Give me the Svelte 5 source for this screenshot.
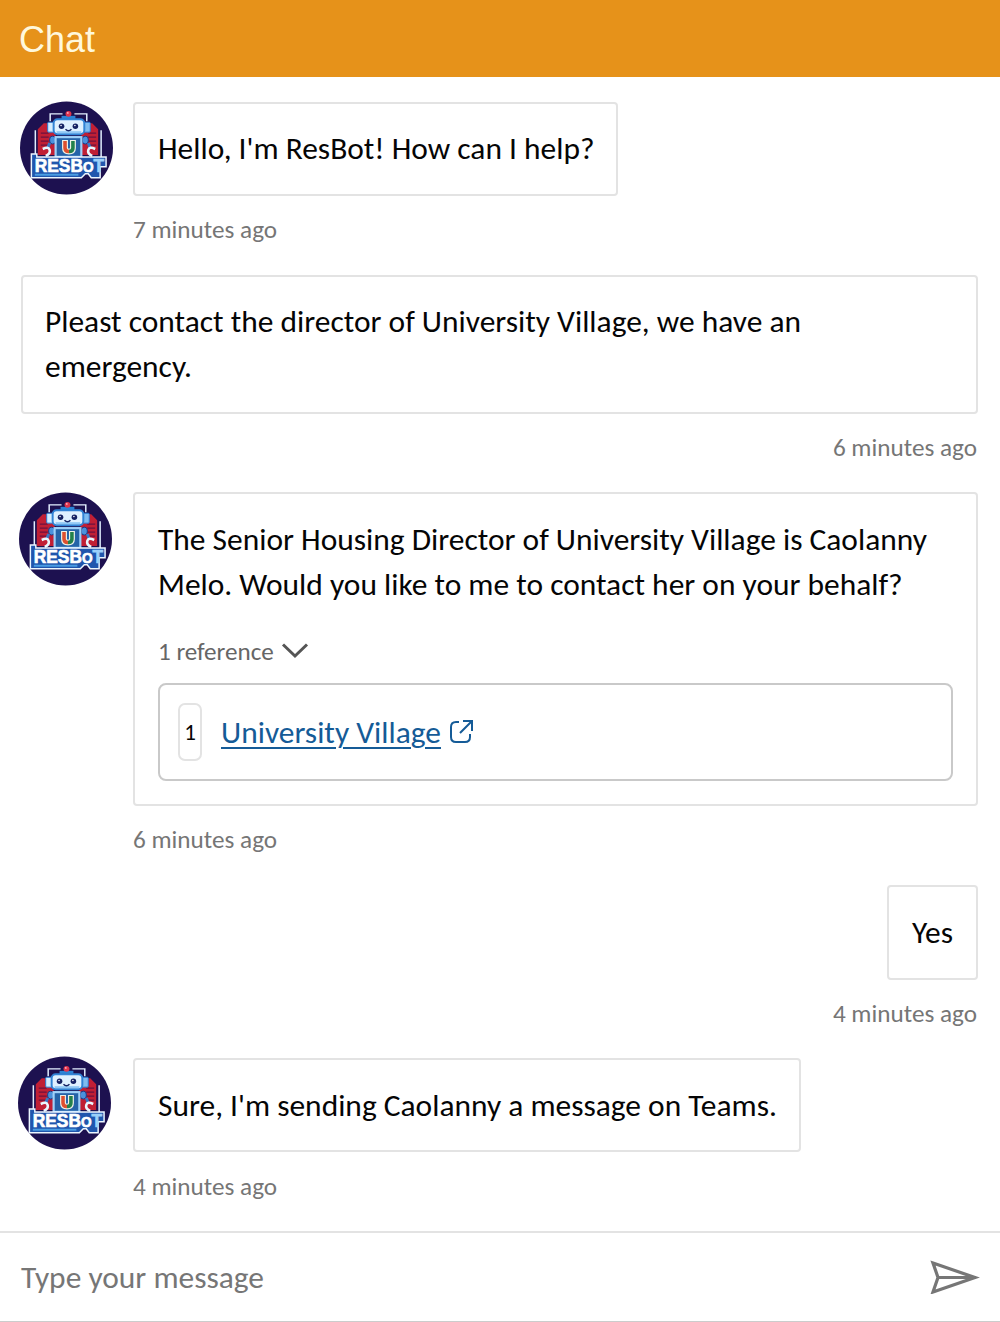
<script>
  const messages = [
    { from: 'bot', lines: ["Hello, I'm ResBot! How can I help?"], time: '7 minutes ago', cls: 'm1' },
    { from: 'user', lines: ['Pleast contact the director of University Village, we have an', 'emergency.'], time: '6 minutes ago', cls: 'm2' },
    { from: 'bot', lines: ['The Senior Housing Director of University Village is Caolanny', 'Melo. Would you like to me to contact her on your behalf?'], time: '6 minutes ago', cls: 'm3', reference: 'University Village' },
    { from: 'user', lines: ['Yes'], time: '4 minutes ago', cls: 'm4' },
    { from: 'bot', lines: ["Sure, I'm sending Caolanny a message on Teams."], time: '4 minutes ago', cls: 'm5' }
  ];
</script>

{#snippet avatar()}
  <svg class="avatar" viewBox="0 0 94 94" role="img" aria-label="ResBot">
    <circle cx="47" cy="47" r="47" fill="#1d1150" />
    <path d="M18 28L24 22H36V54H18ZM62 22H73L79 28V54H62Z" fill="#c01f35" />
    <path d="M21 32H29M21 36H29M21 40H29M21 44H29M69 32H77M69 36H77M69 40H77M69 44H77" stroke="#6c123f" stroke-width="1.3" />
    <path d="M15.5 29V56M82 29V57M30.5 20V12.5H43M55 12.5H67.5V20" fill="none" stroke="#e3efff" stroke-width="1.5" />
    <path d="M42 16H56" stroke="#2b83d5" stroke-width="3" />
    <circle cx="49" cy="12.5" r="3" fill="#df344d" /><circle cx="48.3" cy="11.6" r=".9" fill="#ffb5c0" />
    <rect x="28" y="21" width="6" height="10" rx="1" fill="#d3edff" stroke="#2678d0" />
    <rect x="65" y="21" width="6" height="10" rx="1" fill="#7fbcf0" stroke="#2678d0" />
    <rect x="34" y="18" width="31" height="15" rx="4" fill="#dff1ff" stroke="#3183d5" stroke-width="2" />
    <path d="M37 31H62" stroke="#90c8f5" stroke-width="2" />
    <circle cx="42" cy="25" r="2.8" fill="#152263" /><circle cx="56" cy="25" r="2.8" fill="#152263" />
    <circle cx="41.5" cy="24.2" r=".8" fill="#fff" /><circle cx="55.5" cy="24.2" r=".8" fill="#fff" />
    <path d="M46 28Q49 31 52 28" fill="none" stroke="#152263" stroke-width="1.5" />
    <rect x="30" y="35" width="6" height="8" rx="3" fill="#4a91dc" stroke="#183a87" />
    <rect x="63" y="35" width="6" height="8" rx="3" fill="#4a91dc" stroke="#183a87" />
    <rect x="36" y="36" width="26" height="20" fill="#2563a8" stroke="#9fd0f8" stroke-width="2.2" />
    <path d="M45.5 39V47Q45.5 50.5 49.5 50.5Q53.5 50.5 53.5 47V39" fill="none" stroke="#eef2e7" stroke-width="6" />
    <path d="M45.5 40V47Q45.5 50.5 49.5 50.5" fill="none" stroke="#de502f" stroke-width="3.6" />
    <path d="M53.5 40V47Q53.5 50.5 49.5 50.5" fill="none" stroke="#23814b" stroke-width="3.6" />
    <path d="M30 42L28 47M69 42L71 47" stroke="#3978c5" stroke-width="3" />
    <path d="M23 48Q29 45 30 49Q31 53 26 55M76 48Q70 45 69 49Q68 53 73 55" fill="none" stroke="#e9f7ff" stroke-width="2.6" />
    <path d="M11.5 53H17V56H87V66H81V77H72L69 73H66L62 77H11.5Z" fill="#2056ad" stroke="#ecf6ff" stroke-width="1.5" />
    <path d="M15 74H59" stroke="#4a9de2" stroke-width="2" />
    <text class="logo-text" x="15" y="71.5" textLength="70" lengthAdjust="spacingAndGlyphs">RESB<tspan class="logo-o">O</tspan><tspan class="logo-t">T</tspan></text>
  </svg>
{/snippet}

<main>
  <header><h1>Chat</h1></header>
  <section class="messages">
    {#each messages as message}
      <article class="{message.from} {message.cls}">
        {#if message.from === 'bot'}{@render avatar()}{/if}
        <div class="content">
          <div class="bubble">
            <p>{#each message.lines as line}<span class="line">{line}</span>{/each}</p>
            {#if message.reference}
              <div class="ref-toggle"><span>1 reference</span><svg width="28" height="18" viewBox="0 0 28 18"><path d="M2 1.5L14 13L26 1.5" fill="none" stroke="#555" stroke-width="3" /></svg></div>
              <div class="ref-card">
                <span class="number">1</span>
                <a href="#reference">{message.reference}</a>
                <svg class="external" width="26" height="26" viewBox="0 0 26 26"><path d="M10 3H7Q2 3 2 8V18Q2 23 7 23H16Q21 23 21 18V15M14 2H23V12M23 2L11 14" fill="none" stroke="#155b97" stroke-width="2" /></svg>
              </div>
            {/if}
          </div>
          <time>{message.time}</time>
        </div>
      </article>
    {/each}
  </section>
  <footer>
    <span>Type your message</span>
    <svg width="50" height="34" viewBox="0 0 50 34"><path d="M3 3L45 17.5L3 32L8 17.5ZM8 17.5H44" fill="none" stroke="#767676" stroke-width="3.2" /></svg>
  </footer>
</main>

<style>
  :global(body) { margin: 0; background: #fff; }
  main { width: 1000px; height: 1322px; box-sizing: border-box; display: flex; flex-direction: column; overflow: hidden; background: #fff; color: #050505; font: 31.45px/45px Carlito, Calibri, "Open Sans", sans-serif; font-variant-ligatures: none; border-bottom: 1px solid #ccc; }
  header { height: 77px; flex: none; display: flex; align-items: center; padding: 2px 19px 0; box-sizing: border-box; background: #e6921a; }
  h1 { margin: 0; font: 36px/42px "Liberation Sans", sans-serif; color: #fff8dc; }
  .messages { height: 1154px; flex: none; display: flow-root; }
  article { display: flex; box-sizing: border-box; }
  .bot { padding-left: 20px; padding-right: 22px; }
  .user { padding: 0 22px 0 21px; justify-content: flex-end; }
  .m1 { height: 173px; margin-top: 25px; }
  .m2 { height: 217px; }
  .m3 { height: 393px; padding-left: 19px; }
  .m4 { height: 173px; }
  .m5 { padding-left: 18px; }
  .avatar { width: 93px; height: 94px; flex: none; margin-top: -1px; }
  .m3 .avatar { margin-top: 0; }
  .m5 .avatar { margin-top: -2px; }
  .content { display: flex; flex-direction: column; align-items: flex-start; min-width: 0; }
  .bot .content { margin-left: 20px; }
  .m3 .content { margin-left: 21px; }
  .m5 .content { margin-left: 22px; }
  .user .content { align-items: flex-end; }
  .bubble { border: 2px solid #e3e3e3; border-radius: 4px; padding: 22px 23px; box-sizing: border-box; }
  .m1 .bubble { width: 485px; height: 94px; }
  .m2 .bubble { width: 957px; height: 139px; padding-left: 22px; }
  .m3 .bubble { width: 845px; height: 314px; padding-top: 23px; }
  .m4 .bubble { width: 91px; height: 95px; padding-top: 23px; }
  .m5 .bubble { width: 668px; height: 94px; padding-top: 23px; }
  p { margin: 0; display: flex; flex-direction: column; align-items: flex-start; }
  .line { white-space: nowrap; }
  time { color: #767676; font-size: 25.2px; line-height: 30px; margin-top: 19px; white-space: nowrap; }
  .user time { margin-right: 1px; }
  .m5 time { margin-top: 20px; }
  .ref-toggle { display: flex; align-items: center; gap: 7px; height: 30px; margin-top: 30px; font-size: 25.1px; line-height: 30px; color: #666; }
  .ref-card { box-sizing: border-box; width: 795px; height: 98px; margin-top: 16px; display: flex; align-items: center; padding-left: 18px; border: 2px solid #c9c9c9; border-radius: 8px; }
  .number { width: 24px; height: 58px; box-sizing: border-box; border: 2px solid #e3e3e3; border-radius: 7px; display: flex; align-items: center; justify-content: center; font-size: 23px; }
  a { color: #155b97; margin-left: 19px; text-decoration-thickness: 2px; text-underline-offset: 4px; white-space: nowrap; }
  .external { margin-left: 8px; }
  footer { flex: 1; box-sizing: border-box; border-top: 2px solid #e3e3e3; display: flex; align-items: center; justify-content: space-between; padding: 0 20px 0 21px; color: #767676; }
  .logo-text { font-family: "Liberation Sans", sans-serif; font-weight: 700; font-size: 19px; fill: #fff; stroke: #fff; stroke-width: .7; }
  .logo-o { font-size: 15px; }
  .logo-t { fill: #9bd0fa; stroke: #9bd0fa; }
</style>
